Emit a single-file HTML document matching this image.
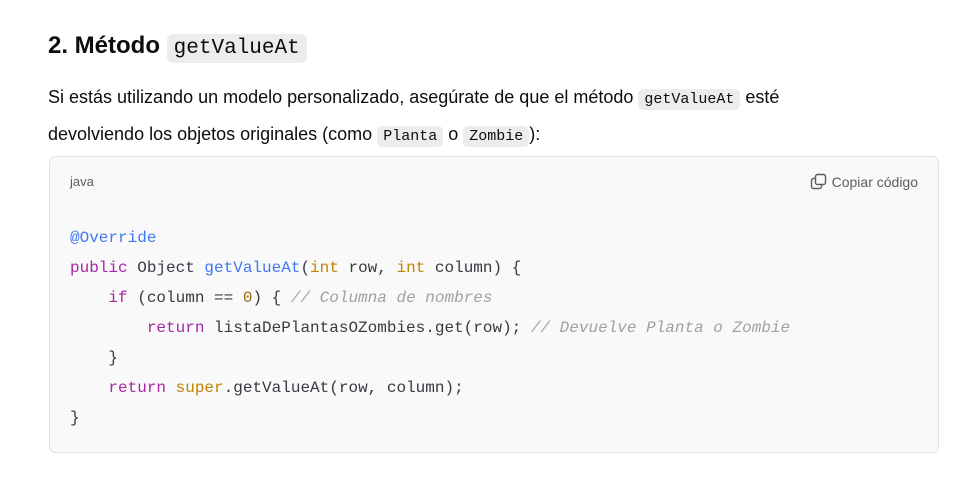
<!DOCTYPE html>
<html><head><meta charset="utf-8"><style>
body{margin:0;background:#fff;width:971px;height:494px;overflow:hidden;font-family:"Liberation Sans",sans-serif;color:#0d0d0d}
h2{position:absolute;left:48px;top:28px;margin:0;font-size:24px;font-weight:bold;line-height:36px}
code.i{font-family:"Liberation Mono",monospace;background:#ececec;border-radius:5px;padding:2px 6px;font-size:15px;font-weight:normal}
h2 code.i{font-size:21px;padding:3px 7px;border-radius:6px}
p{position:absolute;left:48px;top:80px;margin:0;font-size:18px;line-height:34px;width:820px}
.blk{position:absolute;left:49px;top:156px;width:888px;height:295px;background:#f9f9f9;border:1px solid #e3e3e3;border-radius:6px}
.lang{position:absolute;left:20px;top:17px;font-size:13px;color:#5d5d5d}
.copy{position:absolute;right:20px;top:16px;font-size:14px;color:#5d5d5d}
.copy svg{vertical-align:-3px;margin-right:5px}
pre{position:absolute;left:20px;top:66px;margin:0;font-family:"Liberation Mono",monospace;font-size:16px;line-height:30px;color:#383a42}
.k{color:#a626a4}.f{color:#4078f2}.t{color:#c18401}.c{color:#a0a1a7;font-style:italic}.n{color:#986801}
</style></head><body>
<h2>2. Método <code class="i">getValueAt</code></h2>
<p>Si estás utilizando un modelo personalizado, asegúrate de que el método <code class="i">getValueAt</code> esté devolviendo los objetos originales (como <code class="i">Planta</code> o <code class="i">Zombie</code>):</p>
<div class="blk">
<div class="lang">java</div>
<div class="copy"><svg width="17" height="17" viewBox="0 0 17 17" fill="none" stroke="#5d5d5d" stroke-width="1.4"><rect x="5.5" y="1.5" width="10" height="10" rx="2"/><path d="M5.5 5.5H3.5a2 2 0 0 0-2 2v6a2 2 0 0 0 2 2h6a2 2 0 0 0 2-2v-2"/></svg>Copiar código</div>
<pre><span class="f">@Override</span>
<span class="k">public</span> Object <span class="f">getValueAt</span>(<span class="t">int</span> row, <span class="t">int</span> column) {
    <span class="k">if</span> (column == <span class="n">0</span>) { <span class="c">// Columna de nombres</span>
        <span class="k">return</span> listaDePlantasOZombies.get(row); <span class="c">// Devuelve Planta o Zombie</span>
    }
    <span class="k">return</span> <span class="t">super</span>.getValueAt(row, column);
}</pre>
</div>
</body></html>
